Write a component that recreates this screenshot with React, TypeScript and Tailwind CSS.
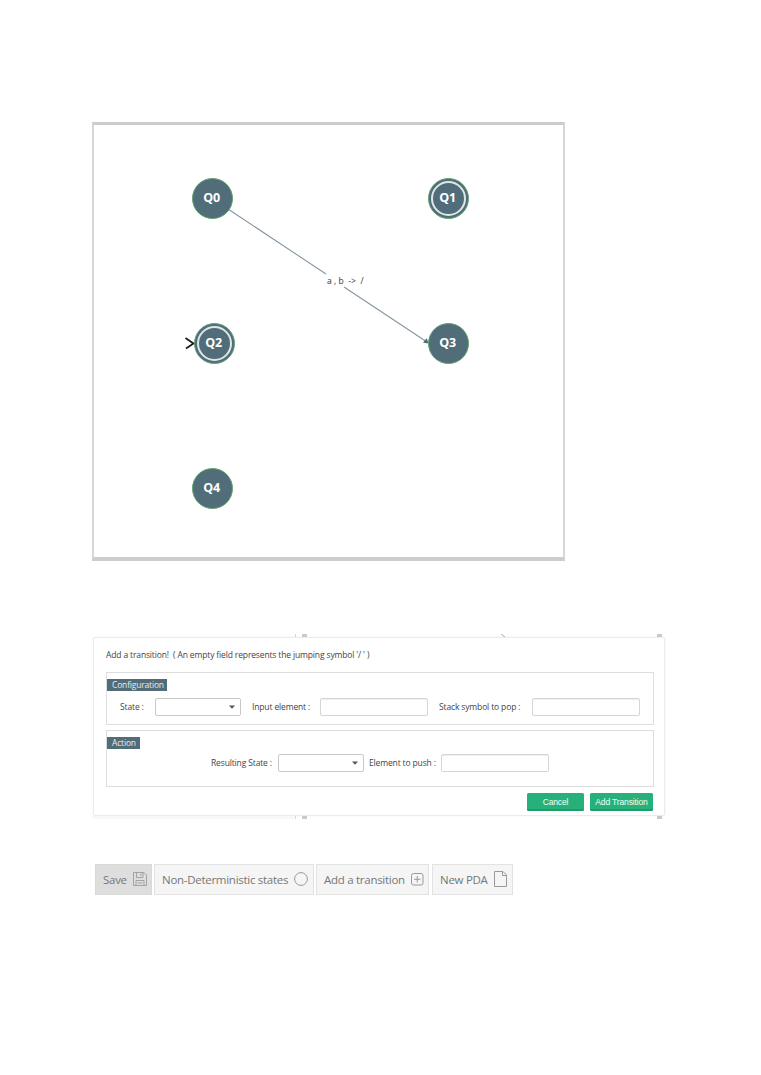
import type { ReactNode } from "react";

type NodeProps = { name: string; at: string; accepting?: boolean };

function StateNode({ name, at, accepting }: NodeProps) {
  return (
    <div
      className={`absolute ${at} flex size-[41px] items-center justify-center rounded-full border border-[#5fa36e] bg-[#526d7a] text-[12.5px] font-bold text-white`}
    >
      {accepting && (
        <span className="absolute inset-[2px] rounded-full border-2 border-[#dfe6ea]" />
      )}
      <span className="-ml-[2px] tracking-[-0.2px]">{name}</span>
    </div>
  );
}

function AutomatonCanvas() {
  return (
    <section className="relative h-[439px] w-[473px] border-x-2 border-t-[3px] border-b-4 border-x-[#d6d6d6] border-y-[#cdcdcd] bg-white">
      <svg
        className="absolute -top-[3px] -left-[2px]"
        width="473"
        height="439"
        viewBox="0 0 473 439"
        fill="none"
      >
        <path d="M136 87L234 152M252 165L335 220" stroke="#8496a3" strokeWidth="1.1" />
        <path d="M337 221.5l-6-.8 3.500-4.500z" fill="#526d7a" />
        <path d="M93.500 216l8 5.500-7.500 5" stroke="#1a1a1a" strokeWidth="1.700" />
      </svg>
      <StateNode name="Q0" at="left-[98px] top-[53px]" />
      <StateNode name="Q1" at="left-[334px] top-[53px]" accepting />
      <StateNode name="Q2" at="left-[100px] top-[198px]" accepting />
      <StateNode name="Q3" at="left-[334px] top-[198px]" />
      <StateNode name="Q4" at="left-[98px] top-[343px]" />
      <span className="absolute top-[150px] left-[233px] text-[8.5px] leading-[12px] tracking-[0.05px] whitespace-pre text-[#333]">
        {"a , b  ->  /"}
      </span>
    </section>
  );
}

function Label({ width, children }: { width: string; children: ReactNode }) {
  return <label className={`${width} shrink-0 whitespace-nowrap`}>{children}</label>;
}

function Field({ gap }: { gap: string }) {
  return (
    <input
      className={`${gap} h-[18px] w-[108px] shrink-0 rounded-[2px] border border-[#d6d6d6] bg-white shadow-[inset_0_1px_0_#eeeeee]`}
    />
  );
}

function Picker({ gap }: { gap: string }) {
  return (
    <button
      type="button"
      className={`${gap} flex h-[18px] w-[86px] shrink-0 items-center justify-end rounded-[2px] border border-[#c9c9c9] bg-white pr-[5px]`}
    >
      <svg width="6" height="4" viewBox="0 0 6 4">
        <path d="M0 .5h6L3 3.800z" fill="#555" />
      </svg>
    </button>
  );
}

function Group({ title, box, tag, children }: { title: string; box: string; tag: string; children: ReactNode }) {
  return (
    <section className={`${box} border border-[#dedede]`}>
      <h2 className={`${tag} h-3 bg-[#526d7a] pl-[5px] text-[8.5px] leading-[12px] tracking-[-0.18px] text-[#e6ecef]`}>
        {title}
      </h2>
      {children}
    </section>
  );
}

function PageEdge({ flip }: { flip?: boolean }) {
  return (
    <div className={`flex h-[3px] w-[573px] ${flip ? "items-start bg-[linear-gradient(to_right,#f8f8f8_202px,transparent_202px)]" : "items-end"}`}>
      <span className="ml-[203px] h-[3px] w-px bg-[#d6d6d6]" />
      <span className="ml-[6px] h-[3px] w-[5px] bg-[#c9c9c9]" />
      {!flip && (
        <svg className="ml-[193px]" width="7" height="3" viewBox="0 0 7 3">
          <path d="M1 0L5 3" stroke="#aaa" />
        </svg>
      )}
      <span className={`${flip ? "ml-[350px]" : "ml-[150px]"} h-[3px] w-[5px] bg-[#c9c9c9]`} />
    </div>
  );
}

function TransitionDialog() {
  return (
    <div>
      <PageEdge />
      <form className="ml-px h-[179px] w-[572px] rounded-[2px] border border-[#ebebeb] bg-white pt-[11px] pl-[12px] text-[8.5px] leading-[12px] tracking-[-0.14px] text-[#444] shadow-[0_0_2px_#f0f0f0]">
        <p className="mb-[11px] whitespace-pre">
          {"Add a transition!  ( An empty field represents the jumping symbol '/ ' )"}
        </p>
        <Group title="Configuration" box="h-[53px] w-[548px] pt-[6px]" tag="w-[60px]">
          <div className="mt-[7px] flex items-center pl-[13px]">
            <Label width="w-[35px]">State :</Label>
            <Picker gap="mr-[11px]" />
            <Label width="w-[68px]">Input element :</Label>
            <Field gap="mr-[11px]" />
            <Label width="w-[93px]">Stack symbol to pop :</Label>
            <Field gap="mr-0" />
          </div>
        </Group>
        <Group title="Action" box="mt-[5px] h-[57px] w-[548px] pt-[6px]" tag="w-[33px]">
          <div className="mt-[5px] flex items-center pl-[104px]">
            <Label width="w-[67px]">Resulting State :</Label>
            <Picker gap="mr-[5px]" />
            <Label width="w-[72px]">Element to push :</Label>
            <Field gap="mr-0" />
          </div>
        </Group>
        <div className="mt-[6px] flex w-[547px] justify-end gap-[6px] font-['Liberation_Sans',sans-serif] text-[8.5px] text-[#f2fff9]">
          <button type="button" className="h-[18px] w-[57px] rounded-[1.500px] border-b-2 border-[#1f9a68] bg-[#27b17a] pt-px tracking-[-0.14px]">
            Cancel
          </button>
          <button type="button" className="h-[18px] w-[63px] rounded-[1.500px] border-b-2 border-[#1f9a68] bg-[#27b17a] pt-px tracking-[-0.14px] whitespace-nowrap">
            Add Transition
          </button>
        </div>
      </form>
      <PageEdge flip />
    </div>
  );
}

function ToolButton({ box, text, label, children }: { box: string; text: string; label: string; children: ReactNode }) {
  return (
    <button className={`${box} flex h-[31px] shrink-0 items-center border pl-[7px] text-[#777]`}>
      <span className={`${text} shrink-0 text-left whitespace-nowrap`}>{label}</span>
      {children}
    </button>
  );
}

function Toolbar() {
  return (
    <nav className="ml-[3px] flex gap-[2px] text-[11.500px] tracking-[-0.28px]">
      <ToolButton box="w-[57px] border-[#d9d9d9] bg-[#dedede]" text="w-[30px]" label="Save">
        <svg className="-mt-px" width="14" height="14" viewBox="0 0 14 14" fill="none" stroke="#a3a3a3">
          <path d="M.5 .5H11L13.500 3V13.500H.5zM3.500 .5V5.500h6.500V.5M8 1.500v2.500M3 13.500V8.500h8v5M4.500 11h5" />
        </svg>
      </ToolButton>
      <ToolButton box="w-[160px] border-[#e2e2e2] bg-[#f5f5f5]" text="w-[132px]" label="Non-Deterministic states">
        <svg className="-mt-px" width="14" height="14" viewBox="0 0 14 14" fill="none" stroke="#999">
          <circle cx="7" cy="7" r="6.400" />
        </svg>
      </ToolButton>
      <ToolButton box="w-[113px] border-[#e2e2e2] bg-[#f5f5f5]" text="w-[87px]" label="Add a transition">
        <svg className="-mt-px" width="13" height="13" viewBox="0 0 13 13" fill="none" stroke="#999">
          <rect x=".5" y=".5" width="11.500" height="11.500" rx="2" />
          <path d="M6.250 3v6.500M3 6.250h6.500" />
        </svg>
      </ToolButton>
      <ToolButton box="ml-[1px] w-[81px] border-[#e2e2e2] bg-[#f5f5f5]" text="w-[54px]" label="New PDA">
        <svg className="-mt-px" width="13" height="16" viewBox="0 0 13 16" fill="none" stroke="#999">
          <path d="M.5 .5H9L12.500 4V15.500H.5zM8.500 .5V4.500H12.500" />
        </svg>
      </ToolButton>
    </nav>
  );
}

export default function App() {
  return (
    <main className="flex h-[1075px] w-[761px] flex-col bg-white pt-[122px] pl-[92px] font-['Open_Sans','Noto_Sans',sans-serif]">
      <AutomatonCanvas />
      <div className="mt-[73px]">
        <TransitionDialog />
      </div>
      <div className="mt-[45px]">
        <Toolbar />
      </div>
    </main>
  );
}
